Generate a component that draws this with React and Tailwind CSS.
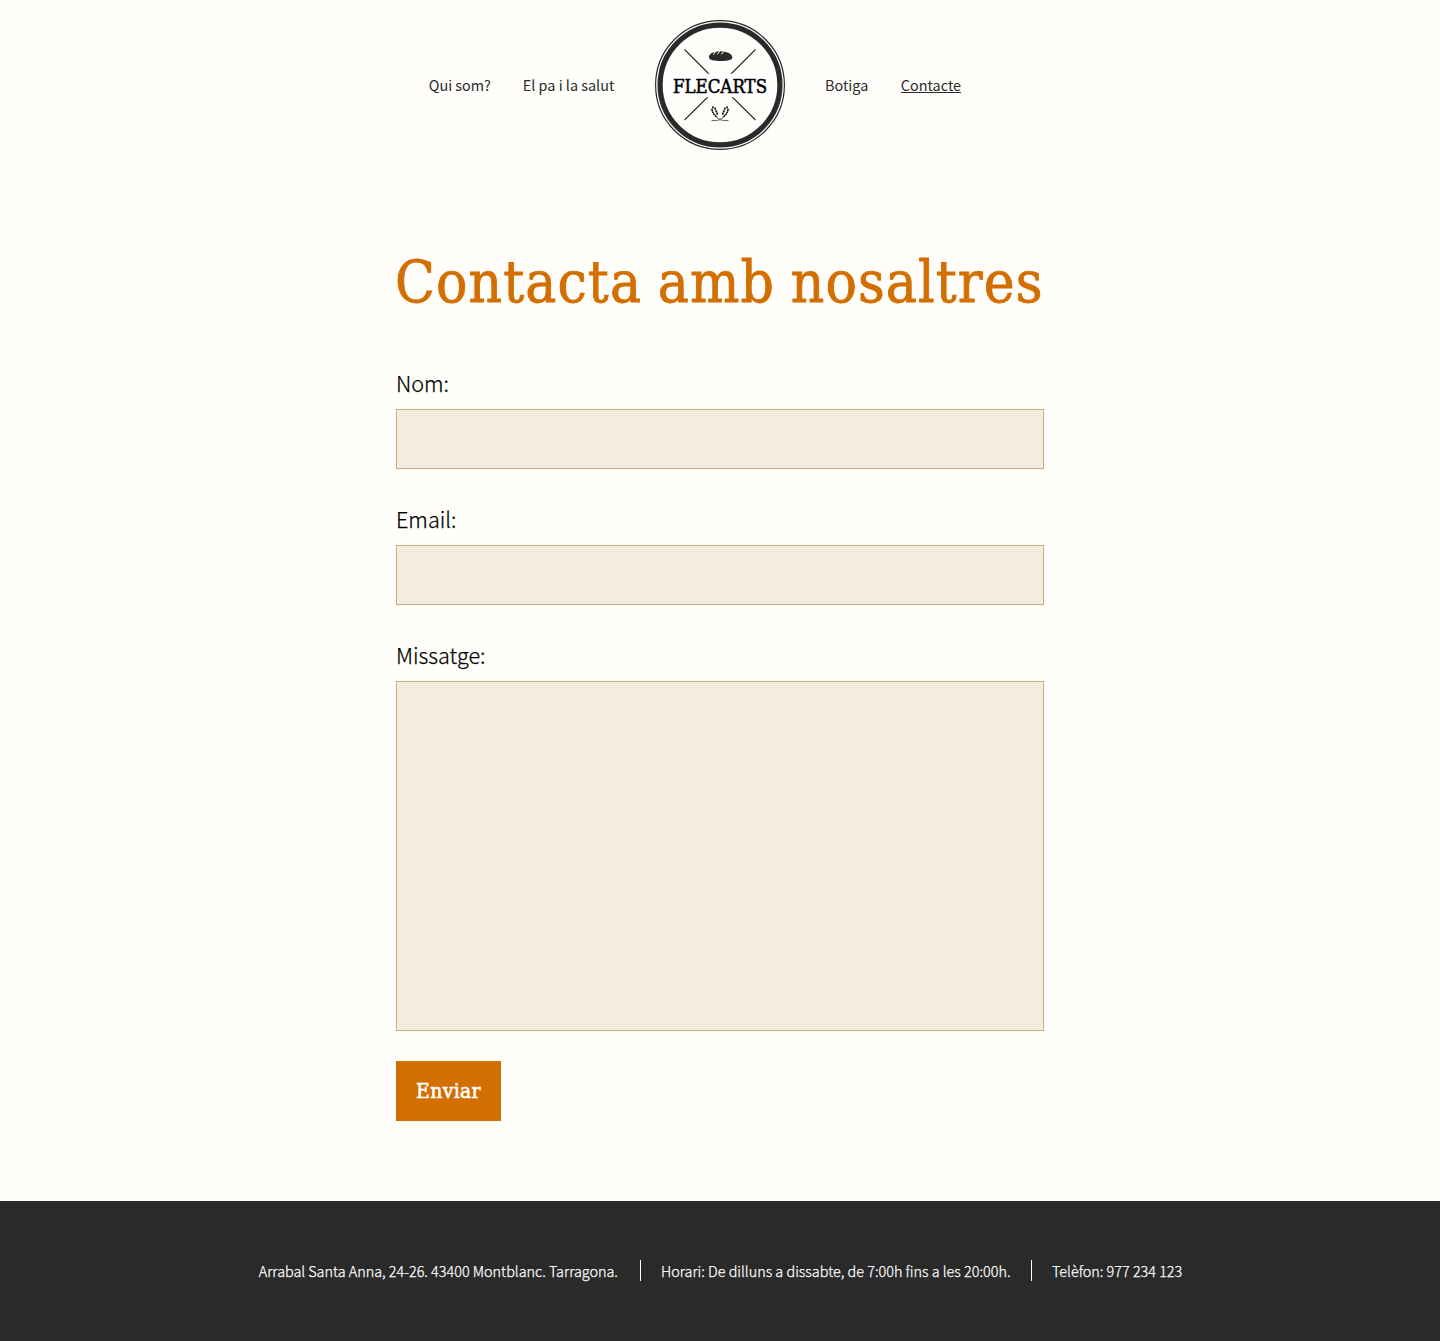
import React from "react";

const wheat = [
  [712.9, 107.4], [711.9, 109.8], [715.2, 108.7], [712.8, 112.2], [716.2, 111.2], [714, 114.4], [717.2, 113.7], [715.8, 116.2],
];

function Ear() {
  return (
    <g>
      <path d="M715.6 115.6C717 118 719.6 119.8 722.5 120.3S726.5 120.3 728.5 120.7" fill="none" stroke="#333" strokeWidth="0.8" />
      {wheat.map(([x, y], i) => (
        <ellipse key={i} cx={x} cy={y} rx="0.9" ry="1.35" transform={`rotate(${i % 2 ? -50 : 0} ${x} ${y})`} />
      ))}
    </g>
  );
}

function Logo() {
  return (
    <svg className="block h-[130px] w-[130px]" viewBox="655 20 130 130" role="img" aria-label="Flecarts" fill="#2a2a2a">
      <circle cx="720" cy="85" r="64.4" fill="#fffefb" stroke="#2a2a2a" strokeWidth="1.2" />
      <circle cx="720" cy="85" r="59.9" fill="none" stroke="#2a2a2a" strokeWidth="5.2" />
      <path d="M684.5 49.5 720 85M755.5 49.5 720 85M684.5 120 720 85M755.5 120 720 85" stroke="#2a2a2a" strokeWidth="1.1" />
      <rect x="672" y="73.7" width="96" height="23.6" fill="#fff" />
      <path d="M709 57.6C708.8 54.6 711.4 52.6 714.2 52.2C718 51 723 51 726.6 52.2C730 53 732.4 55.2 732.4 57.6C732.4 60.2 727 61.1 720.7 61.1S709.2 60.4 709 57.6Z" />
      <path d="M713.4 54.6 716 50.8M717.4 54.4 720 50.6M721.4 54.4 724 50.8" fill="none" stroke="#fffefb" strokeWidth="1" />
      <Ear />
      <g transform="matrix(-1 0 0 1 1440 0)"><Ear /></g>
      <text x="720" y="92.8" textAnchor="middle" textLength="94.2" lengthAdjust="spacingAndGlyphs" fill="#000" stroke="#000" strokeWidth="0.5" className="font-['DejaVu_Serif_Condensed'] text-[18.6px]">FLECARTS</text>
    </svg>
  );
}

const label = "block h-[30px] text-[21.6px] leading-[29px] font-light text-black [-webkit-text-stroke:0.25px_#000]";
const field = "mt-[11px] block w-full resize-none border border-[#c8ad7a] bg-[#f4ece1] px-4 outline-none";

export default function App() {
  return (
    <div className="flex min-h-[1341px] flex-col bg-[#fffefa] font-['Noto_Sans_CJK_SC','Noto_Sans',sans-serif]">
      <header className="grid grid-cols-[1fr_130px_1fr] items-center gap-10 py-5 text-[14.4px] leading-5 text-[#2a2a2a]">
        <nav className="flex justify-end gap-8 pr-[0.7px] whitespace-nowrap">
          <a href="#qui">Qui som?</a>
          <a href="#salut">El pa i la salut</a>
        </nav>
        <Logo />
        <nav className="flex gap-[32.6px] whitespace-nowrap">
          <a href="#botiga">Botiga</a>
          <a href="#contacte" className="underline decoration-1 underline-offset-1">Contacte</a>
        </nav>
      </header>

      <main className="mx-auto w-[648px] pt-[82px] pb-20">
        <h1 className="-ml-px whitespace-nowrap font-['DejaVu_Serif_Condensed',serif] text-[58px] leading-[60px] tracking-[1.1px] [word-spacing:-2px] text-[#d36e00] [-webkit-text-stroke:0.8px_#d36e00]">
          Contacta amb nosaltres
        </h1>
        <form className="mt-14">
          <label className={label} htmlFor="nom">Nom:</label>
          <input id="nom" className={field + " h-[60px]"} />
          <label className={label + " mt-[35px]"} htmlFor="email">Email:</label>
          <input id="email" className={field + " h-[60px]"} />
          <label className={label + " mt-[35px]"} htmlFor="missatge">Missatge:</label>
          <textarea id="missatge" className={field + " h-[350px]"} />
          <button type="button" className="mt-[30px] block h-[60px] w-[105px] bg-[#d36e00] pt-0.5 font-['DejaVu_Serif_Condensed',serif] text-[21px] tracking-[0.3px] text-white [-webkit-text-stroke:0.6px_#fff]">
            Enviar
          </button>
        </form>
      </main>

      <footer className="flex h-[140px] items-center justify-center bg-[#2a2a2a] pb-px pl-px text-[14.4px] leading-[21px] font-light whitespace-nowrap text-white [-webkit-text-stroke:0.25px_#fff]">
        <p className="border-r border-white pr-[22px] tracking-[-0.01px]">Arrabal Santa Anna, 24-26. 43400 Montblanc. Tarragona.</p>
        <p className="border-r border-white pr-[20.4px] pl-5">Horari: De dilluns a dissabte, de 7:00h fins a les 20:00h.</p>
        <p className="pl-5">Telèfon: 977 234 123</p>
      </footer>
    </div>
  );
}
